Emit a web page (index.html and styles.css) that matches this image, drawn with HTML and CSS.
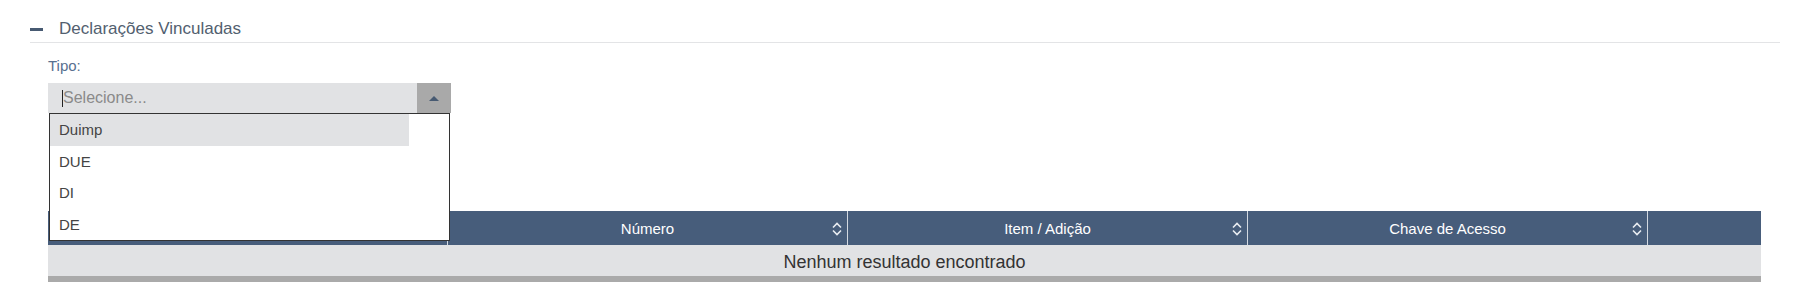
FILE: index.html
```html
<!DOCTYPE html>
<html lang="pt">
<head>
    <meta charset="UTF-8">
    <title>Declarações Vinculadas</title>
    <link rel="stylesheet" href="styles.css">
</head>
<body>

    <div class="secao">
        <div class="secao-titulo">
            <span class="menos"></span>
            <span class="titulo-texto">Declarações Vinculadas</span>
        </div>

        <div class="secao-corpo">
            <div class="campo">
                <label class="rotulo">Tipo:</label>
                <div class="combo">
                    <div class="combo-input"><span class="cursor"></span>Selecione...</div>
                    <div class="combo-botao"><span class="seta"></span></div>
                </div>
                <ul class="combo-lista">
                    <li class="item ativo">Duimp</li>
                    <li class="item">DUE</li>
                    <li class="item">DI</li>
                    <li class="item">DE</li>
                </ul>
            </div>

            <div class="tabela">
                <div class="cabecalho">
                    <div class="col"></div>
                    <div class="col">Número<svg class="ordem" viewBox="0 0 10 14"><path d="M1 5.5 L5 1.5 L9 5.5 M1 8.5 L5 12.5 L9 8.5"/></svg></div>
                    <div class="col">Item / Adição<svg class="ordem" viewBox="0 0 10 14"><path d="M1 5.5 L5 1.5 L9 5.5 M1 8.5 L5 12.5 L9 8.5"/></svg></div>
                    <div class="col">Chave de Acesso<svg class="ordem" viewBox="0 0 10 14"><path d="M1 5.5 L5 1.5 L9 5.5 M1 8.5 L5 12.5 L9 8.5"/></svg></div>
                    <div class="col ultima"></div>
                </div>
                <div class="vazio">Nenhum resultado encontrado</div>
            </div>
        </div>
    </div>

</body>
</html>
```

FILE: styles.css
```css
body {
    margin: 0;
    font-family: "Liberation Sans", Arial, sans-serif;
    background-color: #fff;
    color: #333;
}
.secao {
    margin: 0 24px 0 30px;
    padding-top: 18px;
}
.secao-titulo {
    display: flex;
    align-items: center;
    height: 22px;
    padding-bottom: 2px;
    border-bottom: 1px solid #e3e4e6;
}
.menos {
    width: 13px;
    height: 3px;
    background: #475a72;
    margin-right: 16px;
}
.titulo-texto {
    font-size: 17px;
    line-height: 22px;
    color: #52606f;
}
.secao-corpo {
    padding-left: 18px;
    padding-top: 14px;
}
.campo {
    position: relative;
    width: 403px;
}
.rotulo {
    display: block;
    font-size: 15px;
    line-height: 18px;
    color: #587090;
    margin-bottom: 8px;
}
.combo {
    display: flex;
    height: 30px;
    background: #e1e2e4;
}
.combo-input {
    flex: 1;
    display: flex;
    align-items: center;
    padding-left: 14px;
    font-size: 16px;
    color: #8a8a8a;
}
.cursor {
    width: 1px;
    height: 17px;
    background: #222;
}
.combo-botao {
    width: 34px;
    background: #a9a9a9;
    display: flex;
    align-items: center;
    justify-content: center;
}
.seta {
    width: 0;
    height: 0;
    border-left: 5px solid transparent;
    border-right: 5px solid transparent;
    border-bottom: 5px solid #475a72;
}
.combo-lista {
    position: absolute;
    top: 56px;
    left: 1px;
    width: 399px;
    margin: 0;
    padding: 0;
    list-style: none;
    background: #fff;
    border: 1px solid #333;
    z-index: 2;
}
.item {
    height: 31.5px;
    line-height: 31.5px;
    padding-left: 9px;
    font-size: 15px;
    color: #444;
}
.item.ativo {
    width: calc(90% - 9px);
    background: #e1e2e4;
}
.tabela {
    width: 1713px;
    margin-top: 98px;
    border-bottom: 6px solid #aaa;
}
.cabecalho {
    display: grid;
    grid-template-columns: 400px 400px 400px 400px 1fr;
    height: 34px;
    background: #475d7b;
}
.col {
    position: relative;
    display: flex;
    align-items: center;
    justify-content: center;
    border-right: 1px solid #d3d9e1;
    color: #fff;
    font-size: 15px;
}
.col.ultima {
    border-right: none;
}
.ordem {
    position: absolute;
    right: 5px;
    top: 11px;
    width: 10px;
    height: 14px;
    fill: none;
    stroke: #e9edf2;
    stroke-width: 1.6;
}
.vazio {
    height: 31px;
    line-height: 34px;
    background: #e1e2e4;
    text-align: center;
    font-size: 18px;
    color: #333;
}
```
